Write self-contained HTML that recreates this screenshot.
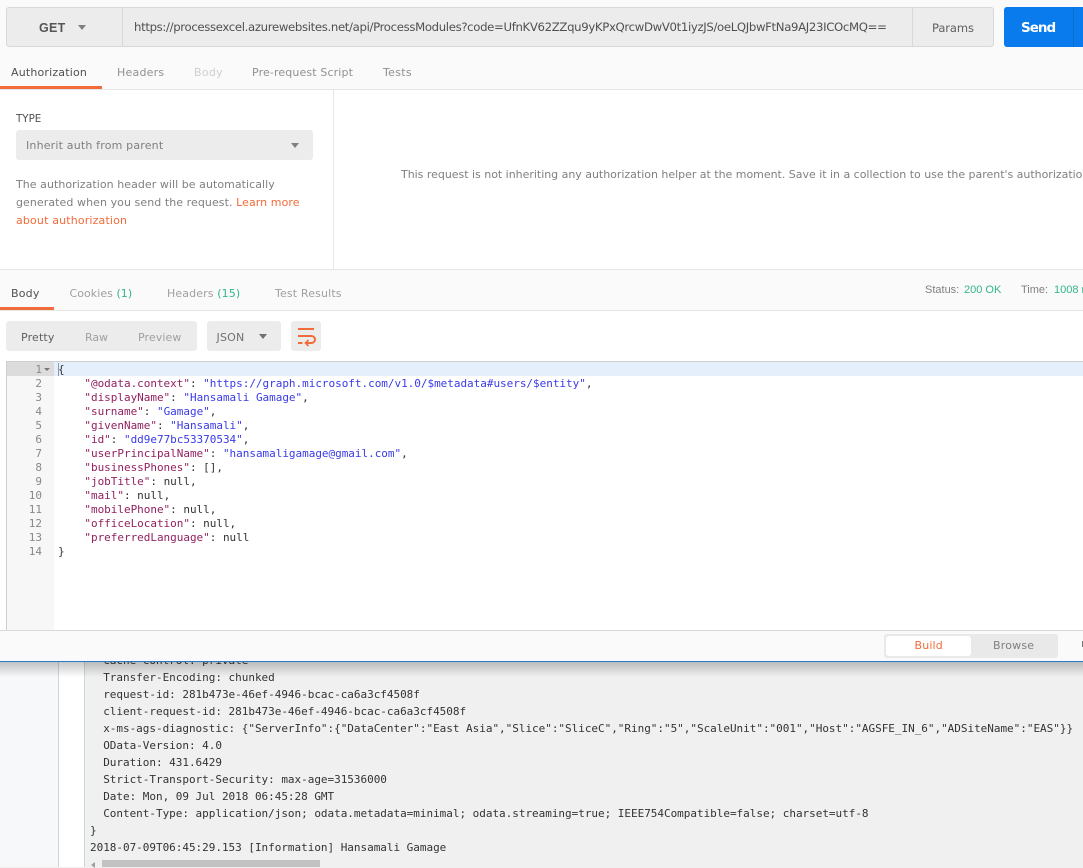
<!DOCTYPE html>
<html><head><meta charset="utf-8"><style>
html,body{margin:0;padding:0;width:1083px;height:867px;overflow:hidden;background:#f0f0f0}
div,span.a{position:absolute;box-sizing:border-box}
.t{font-family:"DejaVu Sans","Liberation Sans",sans-serif;white-space:nowrap;color:#808080;font-size:11px;line-height:16px;height:16px}
.m{font-family:"DejaVu Sans Mono","Liberation Mono",monospace;font-size:11px;white-space:pre;letter-spacing:-.025px}
.k{color:#92205f}.s{color:#3a3ae8}.n{color:#333}
</style></head><body>
<!-- console background -->
<div style="left:0;top:660px;width:1083px;height:207px;background:#f0f0f0"></div>
<div style="left:0;top:660px;width:59px;height:207px;background:#f7f8fa;border-right:1px solid #c9d7e0"></div>
<div style="left:59px;top:660px;width:26px;height:207px;background:#fff;border-right:1px solid #c9d7e0"></div>
<div class="m" style="left:90px;top:652px;color:#333;line-height:17px">  Cache-Control: private
  Transfer-Encoding: chunked
  request-id: 281b473e-46ef-4946-bcac-ca6a3cf4508f
  client-request-id: 281b473e-46ef-4946-bcac-ca6a3cf4508f
  x-ms-ags-diagnostic: {"ServerInfo":{"DataCenter":"East Asia","Slice":"SliceC","Ring":"5","ScaleUnit":"001","Host":"AGSFE_IN_6","ADSiteName":"EAS"}}
  OData-Version: 4.0
  Duration: 431.6429
  Strict-Transport-Security: max-age=31536000
  Date: Mon, 09 Jul 2018 06:45:28 GMT
  Content-Type: application/json; odata.metadata=minimal; odata.streaming=true; IEEE754Compatible=false; charset=utf-8
}
2018-07-09T06:45:29.153 [Information] Hansamali Gamage</div>
<div style="left:102px;top:860px;width:218px;height:7px;background:#c2c2c2"></div>
<div style="left:91px;top:862px;width:0;height:0;border:3px solid transparent;border-right:4px solid #a0a0a0;border-left:0"></div>
<div style="left:0;top:662px;width:1083px;height:15px;background:linear-gradient(#00000038,#00000000)"></div>

<!-- app window -->
<div style="left:0;top:0;width:1083px;height:662px;background:#fff;border-bottom:1px solid #2a7ac8"></div>
<div style="left:0;top:0;width:1083px;height:90px;background:#fafafa;border-bottom:1px solid #e6e6e6"></div>

<!-- request bar -->
<div style="left:6px;top:7px;width:988px;height:40px;background:#ececec;border:1px solid #d8d8d8;border-radius:3px"></div>
<div style="left:122px;top:8px;width:1px;height:38px;background:#d8d8d8"></div>
<div style="left:912px;top:8px;width:1px;height:38px;background:#d8d8d8"></div>
<div class="t" style="left:39px;top:20px;color:#555;font-size:12.5px;font-weight:bold;font-family:'Liberation Sans',sans-serif;letter-spacing:.3px">GET</div>
<div style="left:77.5px;top:25px;width:0;height:0;border:4px solid transparent;border-top:5px solid #808080;border-bottom:0"></div>
<div class="t" id="url" style="left:134px;top:19px;color:#505050;font-size:11.7px;letter-spacing:-.335px;font-family:'DejaVu Sans',sans-serif">https://processexcel.azurewebsites.net/api/ProcessModules?code=UfnKV62ZZqu9yKPxQrcwDwV0t1iyzJS/oeLQJbwFtNa9AJ23ICOcMQ==</div>
<div class="t" style="left:932px;top:20px;font-size:11.5px;color:#606060;letter-spacing:-.1px">Params</div>
<div style="left:1004px;top:7px;width:79px;height:40px;background:#097bed;border-radius:3px 0 0 3px"></div>
<div style="left:1073px;top:7px;width:1px;height:40px;background:#0b6dd2"></div>
<div class="t" style="left:1021px;top:20px;color:#fff;font-size:13.5px;font-weight:bold;font-family:'DejaVu Sans',sans-serif;letter-spacing:-1px">Send</div>

<!-- request tabs -->
<div class="t" style="left:11px;top:65px;color:#505050;letter-spacing:.18px">Authorization</div>
<div class="t" style="left:117px;top:65px;color:#909090;letter-spacing:.23px">Headers</div>
<div class="t" style="left:194px;top:65px;color:#cfcfcf;letter-spacing:.3px">Body</div>
<div class="t" style="left:252px;top:65px;color:#909090;letter-spacing:.13px">Pre-request Script</div>
<div class="t" style="left:383px;top:65px;color:#909090;letter-spacing:.3px">Tests</div>
<div style="left:0;top:86px;width:102px;height:3px;background:#f26b3a"></div>

<!-- auth -->
<div style="left:333px;top:90px;width:1px;height:180px;background:#e6e6e6"></div>
<div class="t" style="left:16px;top:111px;font-size:10.3px;color:#505050">TYPE</div>
<div style="left:16px;top:130px;width:297px;height:30px;background:#ececec;border-radius:3px"></div>
<div class="t" style="left:26px;top:138px;color:#808080;letter-spacing:.18px">Inherit auth from parent</div>
<div style="left:290.5px;top:143px;width:0;height:0;border:4.5px solid transparent;border-top:5px solid #808080;border-bottom:0"></div>
<div class="t" style="left:16px;top:177px;letter-spacing:.05px">The authorization header will be automatically</div>
<div class="t" style="left:16px;top:195px;letter-spacing:.07px">generated when you send the request. <span style="color:#f26b3a">Learn more</span></div>
<div class="t" style="left:16px;top:213px;color:#f26b3a;letter-spacing:.16px">about authorization</div>
<div class="t" style="left:401px;top:167px;letter-spacing:-.02px">This request is not inheriting any authorization helper at the moment. Save it in a collection to use the parent's authorization helper.</div>

<!-- response header -->
<div style="left:0;top:269px;width:1083px;height:42px;background:#fafafa;border-top:1px solid #e6e6e6;border-bottom:1px solid #e6e6e6"></div>
<div class="t" style="left:11px;top:286px;color:#505050;letter-spacing:.2px">Body</div>
<div class="t" style="left:69.5px;top:286px;color:#a0a0a0;letter-spacing:.05px">Cookies <span style="color:#33b58a">(1)</span></div>
<div class="t" style="left:167px;top:286px;color:#a0a0a0;letter-spacing:.12px">Headers <span style="color:#33b58a">(15)</span></div>
<div class="t" style="left:275px;top:286px;color:#a0a0a0;letter-spacing:.15px">Test Results</div>
<div style="left:0;top:307px;width:54px;height:3px;background:#f26b3a"></div>
<div class="t" style="left:925px;top:282px;font-family:'Liberation Sans',sans-serif;font-size:11px;color:#808080">Status:</div>
<div class="t" style="left:964px;top:282px;font-family:'Liberation Sans',sans-serif;font-size:11px;color:#33b58a">200 OK</div>
<div class="t" style="left:1021px;top:282px;font-family:'Liberation Sans',sans-serif;font-size:11px;color:#808080">Time:</div>
<div class="t" style="left:1054px;top:282px;font-family:'Liberation Sans',sans-serif;font-size:11px;color:#33b58a">1008 ms</div>

<!-- view buttons -->
<div style="left:6px;top:321px;width:191px;height:30px;background:#ececec;border-radius:3px"></div>
<div class="t" style="left:21px;top:330px;color:#606060;letter-spacing:.15px">Pretty</div>
<div class="t" style="left:85px;top:330px;color:#a0a0a0;letter-spacing:-.05px">Raw</div>
<div class="t" style="left:138px;top:330px;color:#a0a0a0;letter-spacing:.1px">Preview</div>
<div style="left:207px;top:321px;width:74px;height:30px;background:#ececec;border-radius:3px"></div>
<div class="t" style="left:216.5px;top:330px;color:#707070;letter-spacing:.2px">JSON</div>
<div style="left:259px;top:334px;width:0;height:0;border:4px solid transparent;border-top:5px solid #707070;border-bottom:0"></div>
<div style="left:291px;top:321px;width:30px;height:30px;background:#ececec;border-radius:3px"></div>
<svg style="position:absolute;left:291px;top:321px" width="30" height="30" viewBox="0 0 30 30"><path d="M7 8H23M7 15H20.5A3.5 3.5 0 0 1 20.5 22H15M7 22H11.5" fill="none" stroke="#f26b3a" stroke-width="2"/><path d="M17.5 19L14.5 22L17.5 25" fill="none" stroke="#f26b3a" stroke-width="1.7"/></svg>

<!-- editor -->
<div style="left:6px;top:361px;width:1077px;height:270px;background:#fff;border-top:1px solid #cfcfcf;border-left:1px solid #cfcfcf"></div>
<div style="left:7px;top:362px;width:47px;height:268px;background:#f7f7f7"></div>
<div style="left:7px;top:362px;width:47px;height:14px;background:#dcdcdc"></div>
<div style="left:54px;top:362px;width:1029px;height:14px;background:#e4effb"></div>
<div style="left:58px;top:363px;width:1px;height:13px;background:#8a9aa8"></div>
<div class="m" style="left:7px;top:363px;width:35px;text-align:right;color:#888;line-height:14px">1
2
3
4
5
6
7
8
9
10
11
12
13
14</div>
<div style="left:44px;top:368px;width:0;height:0;border:3px solid transparent;border-top:3px solid #777;border-bottom:0"></div>
<div class="m n" style="left:58px;top:363px;line-height:14px">{
    <span class="k">"@odata.context"</span>: <span class="s">"https://graph.microsoft.com/v1.0/$metadata#users/$entity"</span>,
    <span class="k">"displayName"</span>: <span class="s">"Hansamali Gamage"</span>,
    <span class="k">"surname"</span>: <span class="s">"Gamage"</span>,
    <span class="k">"givenName"</span>: <span class="s">"Hansamali"</span>,
    <span class="k">"id"</span>: <span class="s">"dd9e77bc53370534"</span>,
    <span class="k">"userPrincipalName"</span>: <span class="s">"hansamaligamage@gmail.com"</span>,
    <span class="k">"businessPhones"</span>: [],
    <span class="k">"jobTitle"</span>: null,
    <span class="k">"mail"</span>: null,
    <span class="k">"mobilePhone"</span>: null,
    <span class="k">"officeLocation"</span>: null,
    <span class="k">"preferredLanguage"</span>: null
}</div>

<!-- bottom bar -->
<div style="left:0;top:630px;width:1083px;height:32px;background:#fafafa;border-top:1px solid #d8d8d8;border-bottom:1px solid #2a7ac8"></div>
<div style="left:884px;top:634px;width:174px;height:24px;background:#e9e9e9;border-radius:3px"></div>
<div style="left:886px;top:636px;width:85px;height:20px;background:#fff;border-radius:3px"></div>
<div class="t" style="left:914.5px;top:638px;color:#f26b3a;letter-spacing:.15px">Build</div>
<div class="t" style="left:993px;top:638px;color:#808080;letter-spacing:.2px">Browse</div>
<div style="left:1082px;top:641px;width:1px;height:6px;background:#777"></div>
</body></html>
